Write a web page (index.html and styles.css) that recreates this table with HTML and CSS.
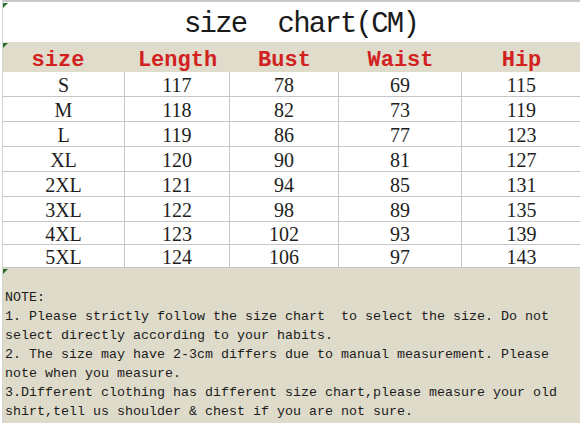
FILE: index.html
```html
<!DOCTYPE html>
<html>
<head>
<meta charset="utf-8">
<link rel="stylesheet" href="styles.css">
</head>
<body>
<div class="sheet">
  <div class="title marked">size&nbsp;&nbsp;chart(CM)</div>
  <div class="grid">
    <div class="hd first marked">size</div>
    <div class="hd">Length</div>
    <div class="hd">Bust</div>
    <div class="hd">Waist</div>
    <div class="hd">Hip</div>

    <div class="c">S</div><div class="c">117</div><div class="c">78</div><div class="c">69</div><div class="c last">115</div>
    <div class="c">M</div><div class="c">118</div><div class="c">82</div><div class="c">73</div><div class="c last">119</div>
    <div class="c">L</div><div class="c">119</div><div class="c">86</div><div class="c">77</div><div class="c last">123</div>
    <div class="c">XL</div><div class="c">120</div><div class="c">90</div><div class="c">81</div><div class="c last">127</div>
    <div class="c">2XL</div><div class="c">121</div><div class="c">94</div><div class="c">85</div><div class="c last">131</div>
    <div class="c">3XL</div><div class="c">122</div><div class="c">98</div><div class="c">89</div><div class="c last">135</div>
    <div class="c">4XL</div><div class="c">123</div><div class="c">102</div><div class="c">93</div><div class="c last">139</div>
    <div class="c">5XL</div><div class="c">124</div><div class="c">106</div><div class="c">97</div><div class="c last">143</div>
  </div>
  <div class="notes marked">NOTE:
1. Please strictly follow the size chart  to select the size. Do not
select directly according to your habits.
2. The size may have 2-3cm differs due to manual measurement. Please
note when you measure.
3.Different clothing has different size chart,please measure your old
shirt,tell us shoulder &amp; chest if you are not sure.</div>
</div>
</body>
</html>
```
FILE: styles.css
```css
html, body {
  margin: 0;
  padding: 0;
  background: #ffffff;
}
.sheet {
  width: 578px;
  height: 423px;
  margin-left: 2px;
  border-left: 1px solid #d4d4d4;
  overflow: hidden;
  display: flex;
  flex-direction: column;
}
.marked {
  position: relative;
}
.marked::before {
  content: "";
  position: absolute;
  left: 0;
  top: 1px;
  width: 0;
  height: 0;
  border-top: 5px solid #2f6e2a;
  border-right: 5px solid transparent;
}
.title {
  height: 35px;
  border-top: 2px solid #c9c9c9;
  background: #ffffff;
  font-family: "Liberation Mono", monospace;
  font-size: 29px;
  letter-spacing: -1.8px;
  color: #1a1a1a;
  display: flex;
  align-items: center;
  justify-content: center;
  padding-left: 18px;
  padding-top: 5px;
}
.grid {
  display: grid;
  grid-template-columns: 122px 105px 109px 123px 119px;
  grid-template-rows: 30px repeat(6, 25px) 23px 23px;
}
.hd {
  background: #e0dccb;
  color: #d2221f;
  font-family: "Liberation Mono", monospace;
  font-weight: bold;
  font-size: 22px;
  display: flex;
  align-items: center;
  justify-content: center;
  padding-top: 7px;
}
.hd.first {
  padding-right: 12px;
}
.c {
  font-family: "Liberation Serif", serif;
  font-size: 20px;
  color: #1e1e1e;
  display: flex;
  align-items: center;
  justify-content: center;
  padding-top: 2px;
  border-right: 1px solid #c6c6c6;
  border-bottom: 1px solid #c6c6c6;
  background: #ffffff;
}
.c.last {
  border-right: none;
}
.notes {
  flex: 1;
  background: #dfdbca;
  font-family: "Liberation Mono", monospace;
  font-size: 13.33px;
  line-height: 19px;
  color: #1c1c1c;
  white-space: pre;
  padding: 20px 0 0 2px;
}
```
